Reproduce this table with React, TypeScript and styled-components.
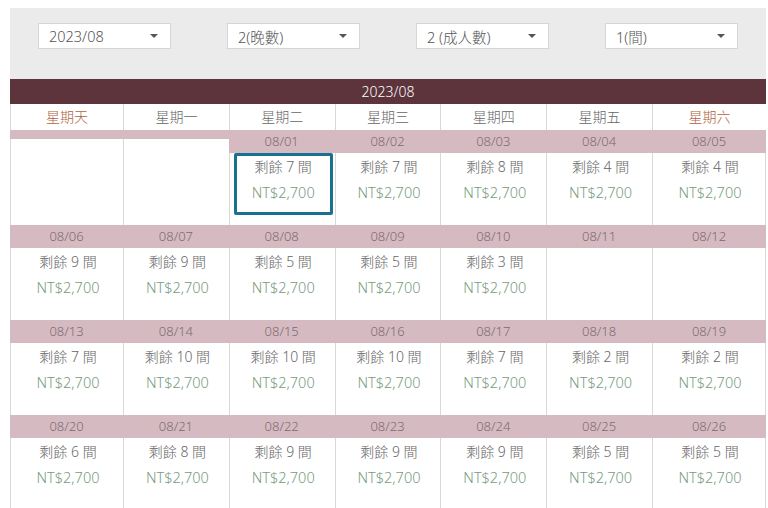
import React from "react";
import styled, { createGlobalStyle } from "styled-components";

const Global = createGlobalStyle`
  html, body { margin: 0; padding: 0; overflow: hidden; background: #fff; }
  body { font-family: "Noto Sans", "Noto Sans CJK TC", sans-serif; font-weight: 300; }
  * { box-sizing: border-box; }
`;

const Page = styled.div`
  padding: 8px 2px 0 10px;
  width: 768px;
`;

const FilterBar = styled.div`
  background: #ebebeb;
  height: 71px;
  display: grid;
  grid-template-columns: repeat(4, 1fr);
  padding-top: 15px;
`;

const FilterCell = styled.div`
  display: flex;
  justify-content: center;
`;

const SelectBox = styled.div`
  width: 133px;
  height: 26px;
  background: #fff;
  border: 1px solid #d6d6d6;
  display: flex;
  align-items: center;
  justify-content: space-between;
  padding: 0 11px 0 10px;
  font-size: 14.5px;
  color: #555;
`;

const Arrow = styled.span`
  width: 0;
  height: 0;
  border-left: 4px solid transparent;
  border-right: 4px solid transparent;
  border-top: 4px solid #555;
  margin-right: 1px;
`;

const MonthBar = styled.div`
  background: #5d333c;
  color: #fff;
  height: 25px;
  line-height: 25px;
  text-align: center;
  font-size: 14px;
`;

const Grid = styled.div`
  display: grid;
  grid-template-columns: 113px repeat(5, 1fr) 114px;
`;

const WeekHead = styled.div<{ $weekend?: boolean }>`
  height: 26px;
  line-height: 26px;
  text-align: center;
  font-size: 14px;
  color: ${(p) => (p.$weekend ? "#b0603e" : "#666")};
  border-left: 1px solid #d8d8d8;
  &:last-child { border-right: 1px solid #d8d8d8; }
`;

const DayCell = styled.div`
  display: flex;
  flex-direction: column;
  height: 95px;
  &:nth-child(7n) > div:last-child { border-right: 1px solid #d8d8d8; }
`;

const DateLabel = styled.div<{ $empty?: boolean }>`
  background: #d6bac2;
  height: ${(p) => (p.$empty ? "9px" : "23px")};
  line-height: 23px;
  text-align: center;
  font-size: 13px;
  color: #7a6a6f;
`;

const DayBody = styled.div`
  flex: 1;
  background: #fff;
  border-left: 1px solid #d8d8d8;
  padding: 0 2px 0 4px;
`;

const InfoBox = styled.div<{ $selected?: boolean }>`
  height: 62px;
  border: 3px solid ${(p) => (p.$selected ? "#19708f" : "transparent")};
  border-radius: 2px;
  text-align: center;
  line-height: 24px;
`;

const Remain = styled.div`
  font-size: 14px;
  color: #666;
  margin-top: -1px;
`;

const Price = styled.div`
  font-size: 14.5px;
  color: #789c80;
  margin-top: 1px;
`;

type Day = { date?: string; rooms?: number };

const weeks: Day[][] = [
  [{}, {}, { date: "08/01", rooms: 7 }, { date: "08/02", rooms: 7 }, { date: "08/03", rooms: 8 }, { date: "08/04", rooms: 4 }, { date: "08/05", rooms: 4 }],
  [{ date: "08/06", rooms: 9 }, { date: "08/07", rooms: 9 }, { date: "08/08", rooms: 5 }, { date: "08/09", rooms: 5 }, { date: "08/10", rooms: 3 }, { date: "08/11" }, { date: "08/12" }],
  [{ date: "08/13", rooms: 7 }, { date: "08/14", rooms: 10 }, { date: "08/15", rooms: 10 }, { date: "08/16", rooms: 10 }, { date: "08/17", rooms: 7 }, { date: "08/18", rooms: 2 }, { date: "08/19", rooms: 2 }],
  [{ date: "08/20", rooms: 6 }, { date: "08/21", rooms: 8 }, { date: "08/22", rooms: 9 }, { date: "08/23", rooms: 9 }, { date: "08/24", rooms: 9 }, { date: "08/25", rooms: 5 }, { date: "08/26", rooms: 5 }],
];

const weekdays = ["星期天", "星期一", "星期二", "星期三", "星期四", "星期五", "星期六"];
const filters = ["2023/08", "2(晚數)", "2 (成人數)", "1(間)"];

export default function App() {
  return (
    <Page>
      <Global />
      <FilterBar>
        {filters.map((f) => (
          <FilterCell key={f}>
            <SelectBox>
              <span>{f}</span>
              <Arrow />
            </SelectBox>
          </FilterCell>
        ))}
      </FilterBar>
      <MonthBar>2023/08</MonthBar>
      <Grid>
        {weekdays.map((w, i) => (
          <WeekHead key={w} $weekend={i === 0 || i === 6}>
            {w}
          </WeekHead>
        ))}
        {weeks.flat().map((d, i) => (
          <DayCell key={i}>
            <DateLabel $empty={!d.date}>{d.date}</DateLabel>
            <DayBody>
              {d.rooms !== undefined && (
                <InfoBox $selected={d.date === "08/01"}>
                  <Remain>剩餘 {d.rooms} 間</Remain>
                  <Price>NT$2,700</Price>
                </InfoBox>
              )}
            </DayBody>
          </DayCell>
        ))}
      </Grid>
    </Page>
  );
}
